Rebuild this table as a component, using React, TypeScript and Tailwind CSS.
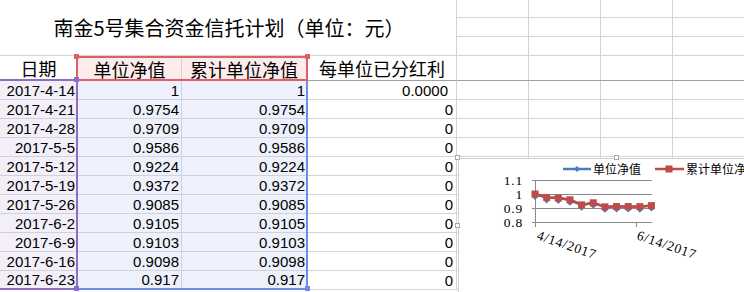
import React from "react";

const rows: [string, string, string, string][] = [
  ["2017-4-14", "1", "1", "0.0000"],
  ["2017-4-21", "0.9754", "0.9754", "0"],
  ["2017-4-28", "0.9709", "0.9709", "0"],
  ["2017-5-5", "0.9586", "0.9586", "0"],
  ["2017-5-12", "0.9224", "0.9224", "0"],
  ["2017-5-19", "0.9372", "0.9372", "0"],
  ["2017-5-26", "0.9085", "0.9085", "0"],
  ["2017-6-2", "0.9105", "0.9105", "0"],
  ["2017-6-9", "0.9103", "0.9103", "0"],
  ["2017-6-16", "0.9098", "0.9098", "0"],
  ["2017-6-23", "0.917", "0.917", "0"],
];

const values = rows.map((r) => parseFloat(r[1]));

const cjk = { fontFamily: '"Noto Sans CJK SC", "Noto Sans", sans-serif' };
const num = { fontFamily: '"Liberation Sans", Arial, sans-serif' };

// last row inside a selection box is shorter: the box's 2px bottom edge takes its place
const rowCls = (i: number) => (i === rows.length - 1 ? "h-[17px]" : "h-[19px] border-b");

function EmptyCells() {
  return (
    <>
      {[0, 1, 2, 3].map((i) => (
        <div key={i} className="w-[72px] shrink-0 border-r border-[#d4d4d4]" />
      ))}
    </>
  );
}

function Chart() {
  // plot box, relative to chart corner
  const x0 = 76;
  const step = 11.65;
  const yOf = (v: number) => 63 - (v - 0.8) * 140;
  const pts = values.map((v, i) => [x0 + i * step, yOf(v)] as const);
  const line = pts.map((p) => p.join(",")).join(" ");
  const serif = { fontFamily: '"Liberation Serif", "Times New Roman", serif', letterSpacing: "0.8px" };

  return (
    <div className="absolute left-[458px] top-[158px] w-[318px] h-[136px] border border-[#cfcfcf] bg-white">
      {/* resize handles */}
      <div className="absolute -left-[4px] -top-[4px] w-[5px] h-[5px] border border-[#a8a8a8] bg-white" />
      <div className="absolute left-[155px] -top-[4px] w-[5px] h-[5px] border border-[#a8a8a8] bg-white" />
      <div className="absolute -left-[4px] top-[64px] w-[5px] h-[5px] border border-[#a8a8a8] bg-white" />

      <svg width="318" height="136" className="block">
        {/* legend */}
        <line x1="104" y1="10" x2="132" y2="10" stroke="#4a7ebb" strokeWidth="2.5" />
        <path d="M118 7 L121 10 L118 13 L115 10 Z" fill="#4a7ebb" />
        <text x="134" y="14.5" fontSize="12" style={cjk} fill="#000">单位净值</text>
        <line x1="196" y1="10" x2="225" y2="10" stroke="#be4b48" strokeWidth="2.5" />
        <rect x="206.5" y="6.5" width="7" height="7" fill="#be4b48" />
        <text x="227" y="14.5" fontSize="12" style={cjk} fill="#000">累计单位净值</text>

        {/* grid + axes */}
        {[21, 35, 49, 63].map((y) => (
          <line key={y} x1={x0 - 3} y1={y + 0.5} x2="193" y2={y + 0.5} stroke="#8a8a8a" strokeWidth="1" />
        ))}
        <line x1={x0 + 0.5} y1="21" x2={x0 + 0.5} y2="68" stroke="#8a8a8a" strokeWidth="1" />
        <line x1="177.5" y1="63" x2="177.5" y2="68" stroke="#8a8a8a" strokeWidth="1" />

        {/* y labels */}
        {(
          [
            ["1.1", 21],
            ["1", 35],
            ["0.9", 49],
            ["0.8", 63],
          ] as const
        ).map(([t, y]) => (
          <text key={t} x="64" y={y + 4.5} fontSize="13.5" textAnchor="end" style={serif} fill="#000">
            {t}
          </text>
        ))}

        {/* series */}
        <polyline points={line} fill="none" stroke="#4a7ebb" strokeWidth="2.5" />
        {pts.map(([x, y], i) => (
          <path key={`d${i}`} d={`M${x} ${y + 1} l2.5 2.5 l-2.5 2.5 l-2.5 -2.5 Z`} fill="#4a7ebb" />
        ))}
        <polyline points={line} fill="none" stroke="#be4b48" strokeWidth="2.5" />
        {pts.map(([x, y], i) => (
          <rect key={`s${i}`} x={x - 3.5} y={y - 3.5} width="7" height="7" fill="#be4b48" />
        ))}

        {/* x labels */}
        <text transform="translate(77 80) rotate(19)" fontSize="13.5" style={serif} fill="#000">4/14/2017</text>
        <text transform="translate(177 80) rotate(19)" fontSize="13.5" style={serif} fill="#000">6/14/2017</text>
      </svg>
    </div>
  );
}

export default function App() {
  return (
    <div className="relative w-[744px] h-[292px] overflow-hidden bg-white text-black">
      {/* title band */}
      <div className="flex h-[56px] border-b border-[#d4d4d4]">
        <div
          className="w-[457px] shrink-0 border-r border-[#d4d4d4] flex items-center justify-center text-[20px] leading-none pl-[2px]"
          style={cjk}
        >
          南金5号集合资金信托计划（单位：元）
        </div>
        {[0, 1, 2, 3].map((i) => (
          <div key={i} className="w-[72px] shrink-0 border-r border-[#d4d4d4] flex flex-col">
            <div className="h-[18px] border-b border-[#d4d4d4]" />
            <div className="h-[19px] border-b border-[#d4d4d4]" />
          </div>
        ))}
      </div>

      {/* header row */}
      <div className="flex h-[25px] text-[18px] leading-none" style={cjk}>
        <div className="w-[76px] shrink-0 border-b-2 border-[#8e6cc4] flex items-center justify-center pl-[1px]">
          日期
        </div>
        <div className="w-[232px] shrink-0 flex border-2 border-[#e0606a] bg-[#fcecec]">
          <div className="w-[104px] shrink-0 border-r border-[#e3c9cc] flex items-center justify-center">
            单位净值
          </div>
          <div className="flex-1 flex items-center justify-center">累计单位净值</div>
        </div>
        <div className="w-[149px] shrink-0 border-r border-b border-r-[#d4d4d4] border-b-[#a0a0a0] flex items-center justify-center">
          每单位已分红利
        </div>
        <div className="flex border-b border-[#a0a0a0]">
          <EmptyCells />
        </div>
      </div>

      {/* data area */}
      <div className="flex text-[15px] leading-none" style={num}>
        {/* category range */}
        <div className="w-[78px] shrink-0 flex flex-col border-r-2 border-b-2 border-[#8e6cc4] bg-[#f2eff8]">
          {rows.map((r, i) => (
            <div key={i} className={`${rowCls(i)} border-[#cfd0dc] flex items-center justify-end pr-[1px]`}>
              {r[0]}
            </div>
          ))}
        </div>

        {/* value range */}
        <div className="w-[230px] shrink-0 flex flex-col border-r-2 border-b-2 border-[#6a8ee6] bg-[#eef1fb]">
          {rows.map((r, i) => (
            <div key={i} className={`${rowCls(i)} border-[#cdd2e2] flex`}>
              <div className="w-[104px] shrink-0 border-r border-[#cdd2e2] flex items-center justify-end pr-[2px]">
                {r[1]}
              </div>
              <div className="flex-1 flex items-center justify-end pr-[1px]">{r[2]}</div>
            </div>
          ))}
        </div>

        {/* remaining columns */}
        <div className="flex flex-col">
          {rows.map((r, i) => (
            <div key={i} className="h-[19px] flex border-b border-[#d4d4d4]">
              <div
                className={`w-[149px] shrink-0 border-r border-[#d4d4d4] flex items-center justify-end ${
                  i === 0 ? "pr-[8px]" : "pr-[3px]"
                }`}
              >
                {r[3]}
              </div>
              <EmptyCells />
            </div>
          ))}
        </div>
      </div>

      {/* selection handles */}
      <div className="absolute left-[74px] top-[54px] w-[5px] h-[5px] bg-[#e0606a]" />
      <div className="absolute left-[305px] top-[54px] w-[5px] h-[5px] bg-[#e0606a]" />
      <div className="absolute left-[74px] top-[77px] w-[5px] h-[5px] bg-[#8e6cc4]" />
      <div className="absolute left-[74px] top-[286px] w-[5px] h-[5px] bg-[#8e6cc4]" />
      <div className="absolute left-[305px] top-[286px] w-[5px] h-[5px] bg-[#6a8ee6]" />

      <Chart />
    </div>
  );
}
